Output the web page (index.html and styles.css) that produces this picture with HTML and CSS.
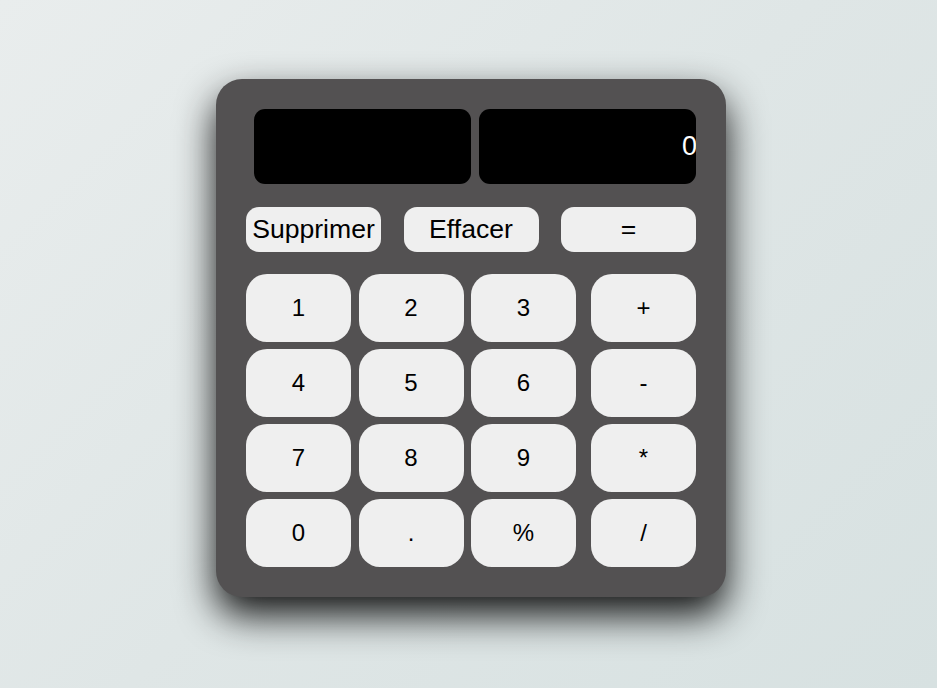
FILE: index.html
```html
<!DOCTYPE html>
<html lang="fr">
<head>
<meta charset="utf-8">
<title>Calculatrice</title>
<link rel="stylesheet" href="styles.css">
</head>
<body>
<div class="calc">
  <div class="displays">
    <div class="screen"></div>
    <div class="screen"><span class="value">0</span></div>
  </div>
  <div class="actions">
    <button class="act">Supprimer</button>
    <button class="act">Effacer</button>
    <button class="act">=</button>
  </div>
  <div class="pad">
    <div class="digits">
      <button class="key">1</button>
      <button class="key">2</button>
      <button class="key">3</button>
      <button class="key">4</button>
      <button class="key">5</button>
      <button class="key">6</button>
      <button class="key">7</button>
      <button class="key">8</button>
      <button class="key">9</button>
      <button class="key">0</button>
      <button class="key">.</button>
      <button class="key">%</button>
    </div>
    <div class="ops">
      <button class="key">+</button>
      <button class="key">-</button>
      <button class="key">*</button>
      <button class="key">/</button>
    </div>
  </div>
</div>
</body>
</html>
```
FILE: styles.css
```css
html, body {
  margin: 0;
  height: 100%;
}
body {
  background: linear-gradient(135deg, #e9eded 0%, #dfe6e6 50%, #d7e1e1 100%);
  font-family: "Liberation Sans", Arial, sans-serif;
  padding-top: 79px;
  box-sizing: border-box;
}
.calc {
  width: 510px;
  height: 518px;
  margin-left: 216px;
  box-sizing: border-box;
  background: #535152;
  border-radius: 26px;
  padding: 30px;
  box-shadow: 0 18px 38px rgba(0, 0, 0, 0.92);
}
.displays {
  display: flex;
  gap: 8px;
  padding-left: 8px;
}
.screen {
  flex: 1;
  height: 75px;
  background: #000;
  border-radius: 11px;
  color: #fff;
  font-size: 27px;
  display: flex;
  align-items: center;
  justify-content: flex-end;
  overflow: hidden;
}
.value {
  margin-right: -1px;
}
.actions {
  display: flex;
  justify-content: space-between;
  margin-top: 23px;
}
.act {
  width: 135px;
  height: 45px;
  border: none;
  border-radius: 13px;
  background: #efefef;
  font-family: "Liberation Sans", Arial, sans-serif;
  font-size: 26.6px;
  color: #000;
  padding: 0;
}
.pad {
  display: flex;
  gap: 15px;
  margin-top: 22px;
}
.digits {
  display: grid;
  grid-template-columns: repeat(3, 105px);
  grid-auto-rows: 68px;
  column-gap: 7.5px;
  row-gap: 7px;
}
.ops {
  display: grid;
  grid-template-columns: 105px;
  grid-auto-rows: 68px;
  row-gap: 7px;
}
.key {
  border: none;
  border-radius: 21px;
  background: #efefef;
  font-family: "Liberation Sans", Arial, sans-serif;
  font-size: 24px;
  color: #000;
  padding: 0;
}
```
